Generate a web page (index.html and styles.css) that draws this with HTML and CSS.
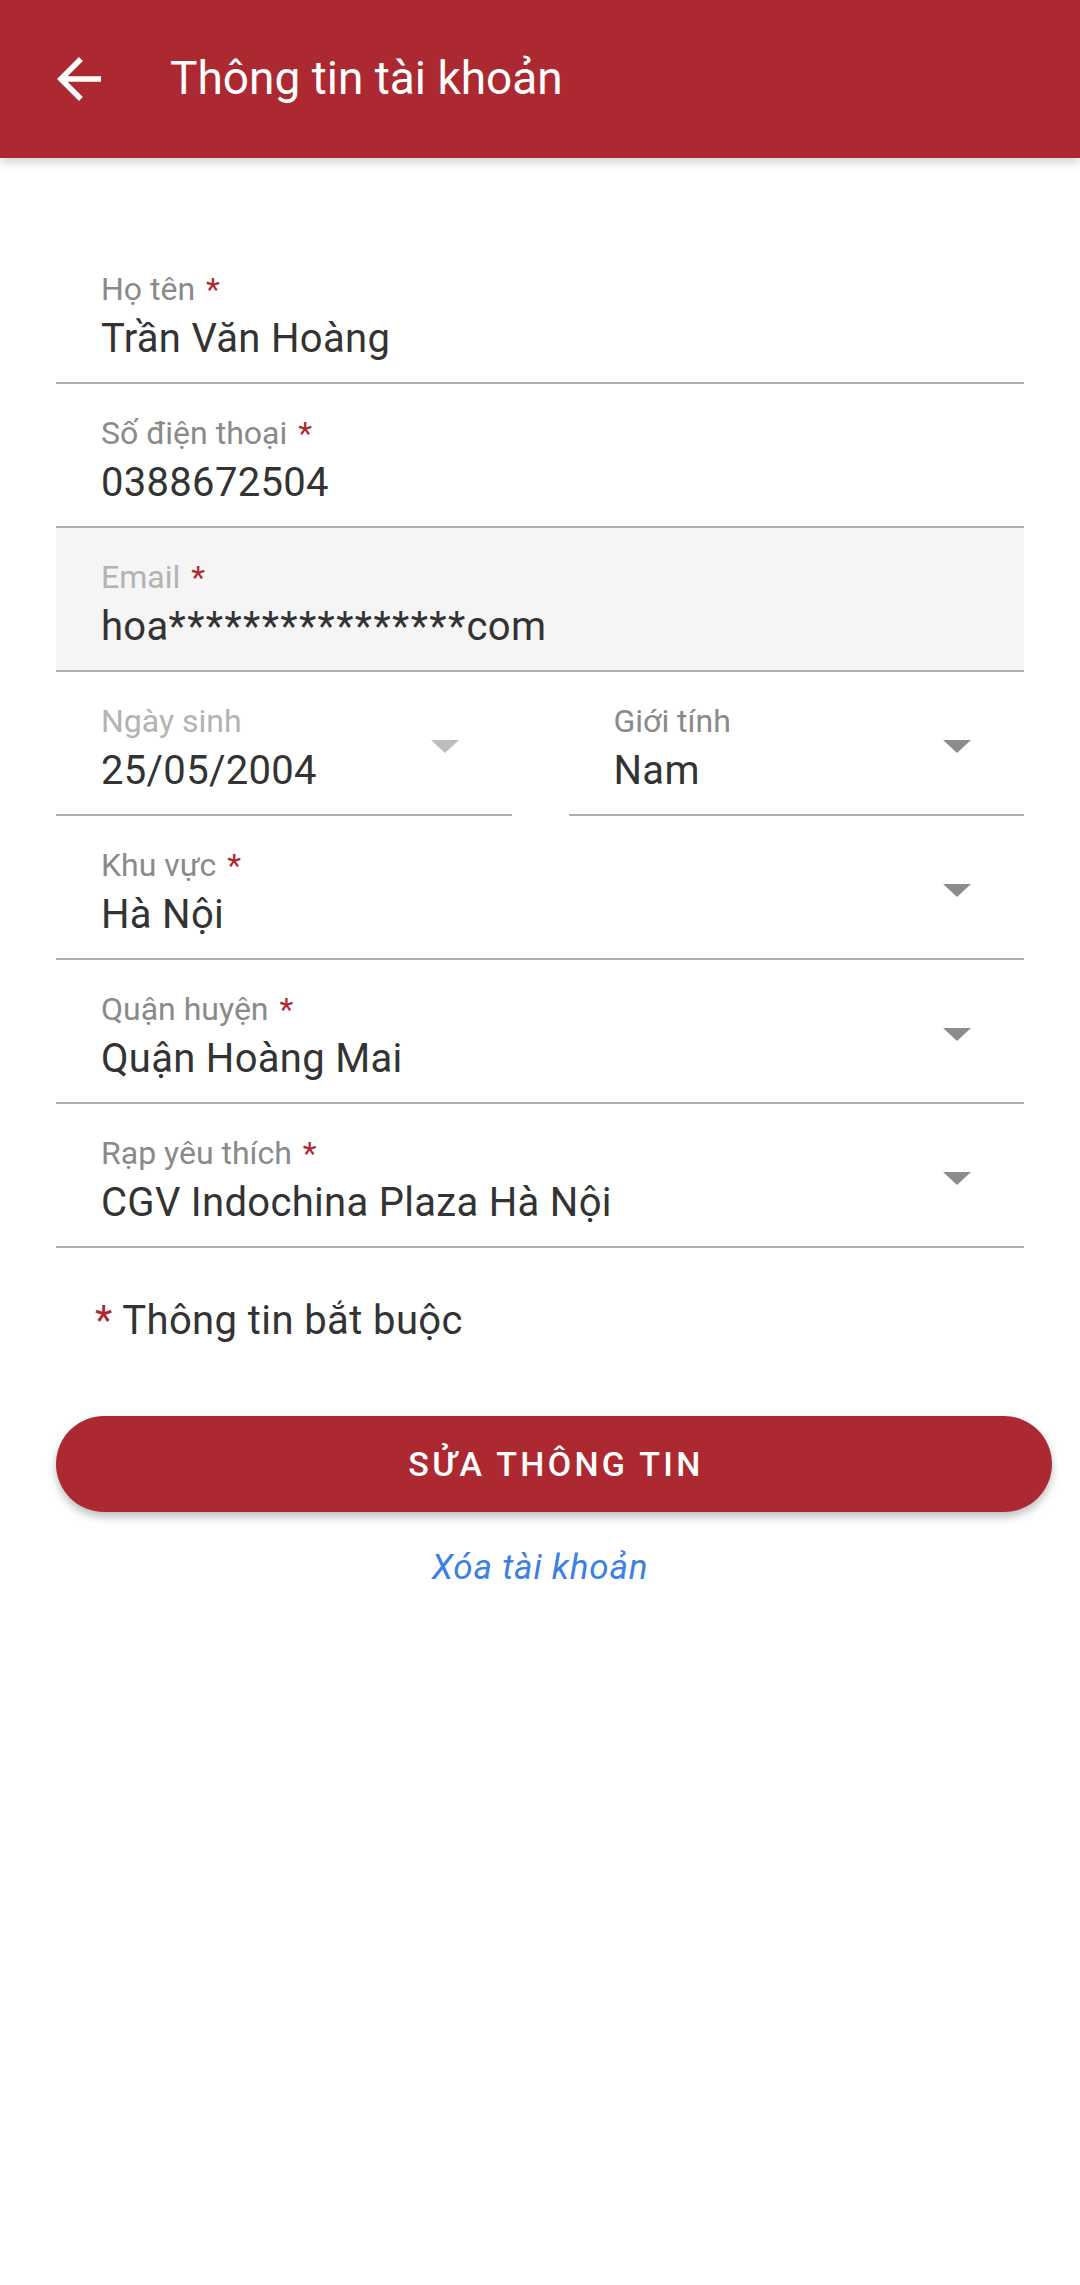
FILE: index.html
```html
<!DOCTYPE html>
<html lang="vi">
<head>
<meta charset="utf-8">
<title>Thông tin tài khoản</title>
<link rel="stylesheet" href="styles.css">
</head>
<body>
<header class="appbar">
  <span class="back">
    <svg viewBox="0 0 24 24" width="66" height="66"><path d="M20 11H7.83l5.59-5.59L12 4l-8 8 8 8 1.41-1.41L7.83 13H20v-2z" fill="#fff"/></svg>
  </span>
  <h1 class="title">Thông tin tài khoản</h1>
</header>
<main class="form">
  <div class="field">
    <div class="label">Họ tên <span class="req">*</span></div>
    <div class="value">Trần Văn Hoàng</div>
  </div>
  <div class="field">
    <div class="label">Số điện thoại <span class="req">*</span></div>
    <div class="value">0388672504</div>
  </div>
  <div class="field disabled">
    <div class="label">Email <span class="req">*</span></div>
    <div class="value">hoa<span class="mask">****************</span>com</div>
  </div>
  <div class="row">
    <div class="field select disabled-select">
      <div class="label">Ngày sinh</div>
      <div class="value">25/05/2004</div>
      <span class="caret"></span>
    </div>
    <div class="field select">
      <div class="label">Giới tính</div>
      <div class="value">Nam</div>
      <span class="caret"></span>
    </div>
  </div>
  <div class="field select">
    <div class="label">Khu vực <span class="req">*</span></div>
    <div class="value">Hà Nội</div>
    <span class="caret"></span>
  </div>
  <div class="field select">
    <div class="label">Quận huyện <span class="req">*</span></div>
    <div class="value">Quận Hoàng Mai</div>
    <span class="caret"></span>
  </div>
  <div class="field select">
    <div class="label">Rạp yêu thích <span class="req">*</span></div>
    <div class="value">CGV Indochina Plaza Hà Nội</div>
    <span class="caret"></span>
  </div>
  <p class="note"><span class="req">*</span> Thông tin bắt buộc</p>
  <button class="submit">SỬA THÔNG TIN</button>
  <a class="delete">Xóa tài khoản</a>
</main>
</body>
</html>
```
FILE: styles.css
```css
* { box-sizing: border-box; }
html, body { margin: 0; padding: 0; background: #fff; }
body { font-family: Roboto, "Noto Sans", sans-serif; color: #333; width: 1080px; min-height: 2285px; }

.appbar {
  height: 158px;
  background: #ad2931;
  display: flex;
  align-items: center;
  padding-left: 46px;
  box-shadow: 0 4px 10px rgba(0,0,0,0.18);
  position: relative;
}
.back { width: 66px; height: 66px; display: flex; }
.title {
  margin: 0 0 0 58px;
  font-size: 46px;
  font-weight: 400;
  color: #fff;
  line-height: 1;
  padding-bottom: 2px;
}

.form {
  padding: 82px 56px 0 56px;
  display: flex;
  flex-direction: column;
}
.field {
  position: relative;
  width: 968px;
  height: 144px;
  padding: 31px 45px 0 45px;
  border-bottom: 2px solid #aeaeae;
}
.label {
  font-size: 32px;
  line-height: 36px;
  color: #8a8a8a;
}
.label .req { margin-left: 3px; }
.req { color: #b0282f; }
.value {
  margin-top: 8px;
  font-size: 40px;
  line-height: 48px;
  color: #333;
  letter-spacing: 0.3px;
}
.mask { letter-spacing: 1.4px; }
.disabled { background: #f5f5f5; }
.disabled .label, .disabled-select .label { color: #b3b3b3; }

.row { display: flex; gap: 57px; width: 968px; }
.row .field { width: 455px; flex: 1 1 0; }

.caret {
  position: absolute;
  right: 53px;
  top: 68px;
  width: 0; height: 0;
  border-left: 14px solid transparent;
  border-right: 14px solid transparent;
  border-top: 13px solid #8c8c8c;
}
.disabled-select .caret { border-top-color: #bdbdbd; }

.note {
  margin: 49px 0 0 39px;
  font-size: 40px;
  line-height: 48px;
  color: #333;
  letter-spacing: 0.4px;
}
.note .req { margin-right: 0; }

.submit {
  margin-top: 71px;
  width: 996px;
  height: 96px;
  border: none;
  border-radius: 48px;
  background: #ad2931;
  color: #fff;
  font-family: Roboto, sans-serif;
  font-size: 34px;
  font-weight: 500;
  letter-spacing: 3.3px;
  box-shadow: 0 5px 8px rgba(0,0,0,0.25);
  padding: 0 0 0 4px;
}
.delete {
  margin: 36px -56px 0 -56px;
  width: 1080px;
  text-align: center;
  font-size: 35px;
  line-height: 40px;
  font-style: italic;
  color: #3d80e4;
  letter-spacing: 0.8px;
}
```
